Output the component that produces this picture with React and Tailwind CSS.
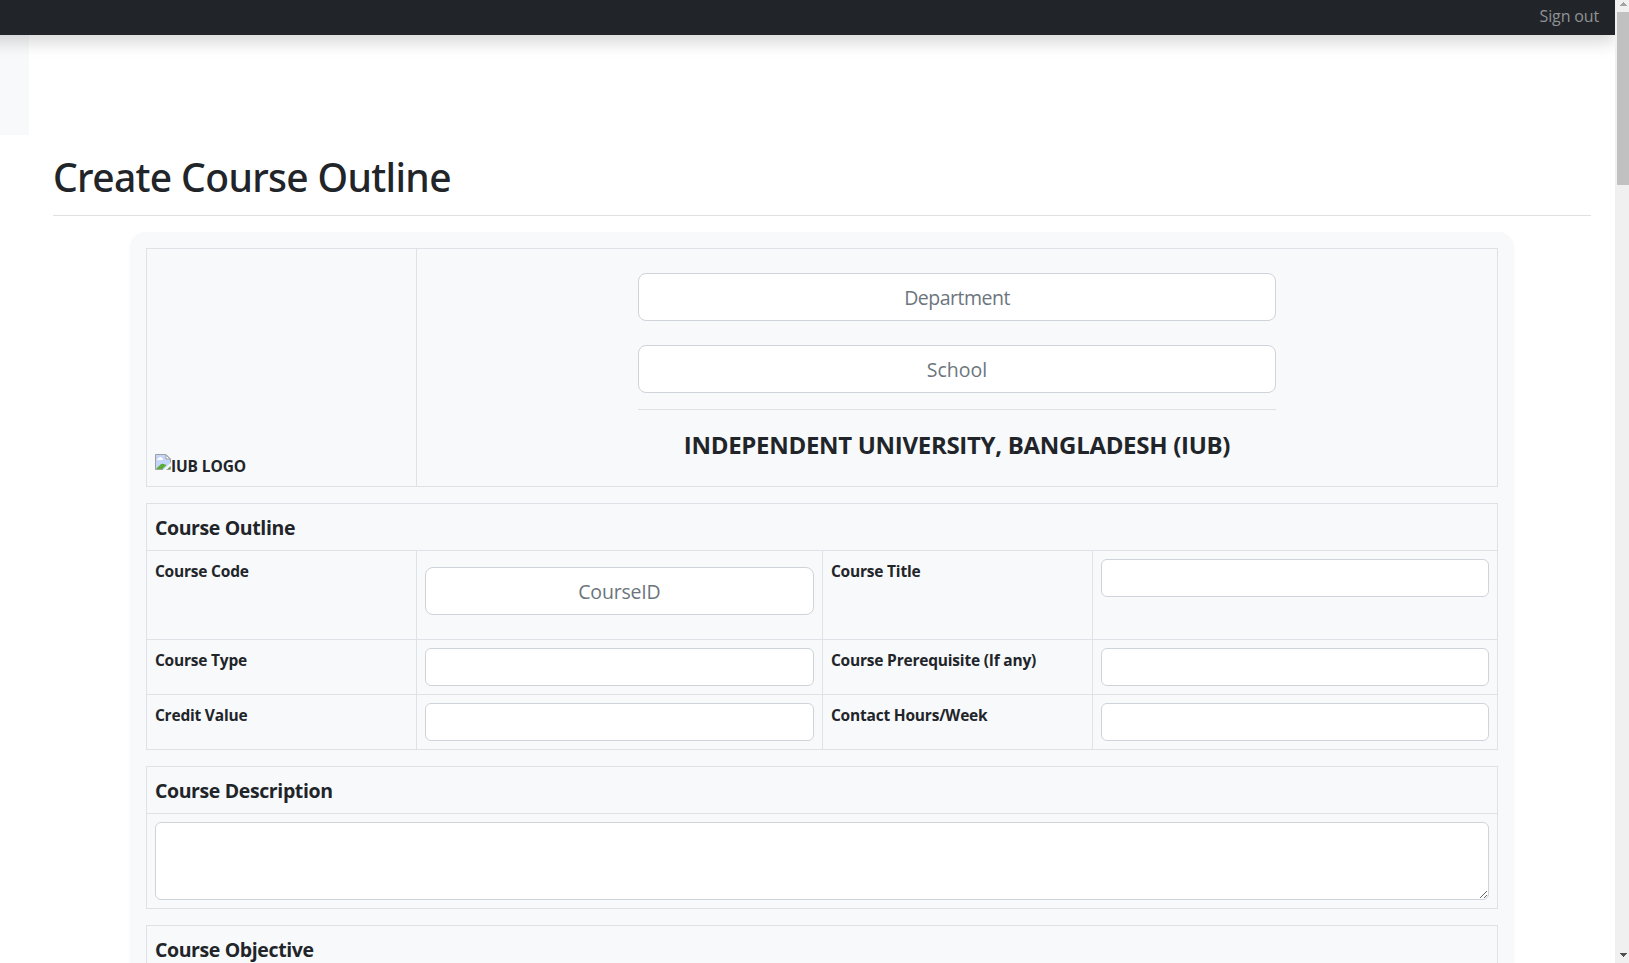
const cell = "border border-[#dee2e6] p-2 align-top text-left";
const control = "block w-full bg-white border border-[#ced4da] outline-none";

function Label({ children }) {
  return (
    <th className={`${cell} text-[15.5px] leading-[25px] font-bold tracking-[-0.2px]`}>{children}</th>
  );
}

function SectionHead({ children }) {
  return (
    <tr>
      <th
        colSpan={4}
        className="border border-[#dee2e6] px-2 pt-[9px] pb-[7px] text-left text-[19.5px] leading-[30px] font-bold tracking-[-0.38px]"
      >
        {children}
      </th>
    </tr>
  );
}

function Field() {
  return (
    <td className={cell}>
      <input className={`${control} h-[38px] rounded-md px-3`} />
    </td>
  );
}

function LargeInput({ placeholder, className }) {
  return (
    <input
      placeholder={placeholder}
      className={`${control} h-12 rounded-lg px-4 text-center text-[19.5px] placeholder:text-[#6c757d] placeholder:opacity-100 ${className}`}
    />
  );
}

function Table({ children }) {
  return (
    <table className="mb-4 w-full table-fixed border-collapse">
      <colgroup>
        <col className="w-[270px]" />
        <col className="w-[406px]" />
        <col className="w-[270px]" />
        <col />
      </colgroup>
      <tbody>{children}</tbody>
    </table>
  );
}

function TextSection({ title }) {
  return (
    <Table>
      <SectionHead>{title}</SectionHead>
      <tr>
        <td colSpan={4} className={cell}>
          <textarea className={`${control} h-[78px] resize-y rounded-md px-3 py-1.5`} />
        </td>
      </tr>
    </Table>
  );
}

function BrokenImage() {
  return (
    <svg width="16" height="16" viewBox="0 0 16 16" className="shrink-0">
      <path d="M0.5 0.5H11L15.5 5V9L8.5 15.5H0.5Z" fill="#c3d5f8" />
      <path d="M2 5.5q.3-1.400 1.700-1.300Q4.400 2.600 5.800 3.100 7 3.300 7 4.300 8.300 4.500 8 6H2.500Z" fill="#fff" />
      <path d="M1 15L5.500 10.500Q7.500 9 10 10.500L11.500 11 7.500 15Z" fill="#5aab38" />
      <path d="M12.500 15L15 12.500V15Z" fill="#5aab38" />
      <path d="M15.500 8.500V5L11 .5H.5V15.500H8M11.500 15.500H15.500V12.500" fill="none" stroke="#a0a0a0" />
      <path d="M11 1V5H15Z" fill="#fff" stroke="#a0a0a0" />
    </svg>
  );
}

export default function App() {
  return (
    <div className="flex h-[963px] overflow-hidden bg-white font-['Open_Sans','Noto_Sans',sans-serif] text-[#212529]">
      <div className="flex min-w-0 flex-1 flex-col overflow-hidden">
        <header className="z-10 -ml-6 flex h-[35px] shrink-0 justify-end bg-[#212529] pt-1 pr-4 shadow-[0_8px_16px_rgba(0,0,0,0.15)]">
          <a className="text-base leading-6 tracking-[-0.15px] text-[#909294]">Sign out</a>
        </header>
        <div className="flex min-h-0 flex-1">
          <nav className="h-[100px] w-[29px] shrink-0 bg-[#f8f9fb]" />
          <main className="min-w-0 flex-1 px-6 pt-[118px]">
            <div className="border-b border-[#dee0e2] pb-3.5">
              <h1 className="font-['Noto_Sans',sans-serif] text-[39px] leading-[48px] font-medium tracking-[-0.65px]">
                Create Course Outline
              </h1>
            </div>
            <div className="mx-auto mt-4 w-[90%] rounded-2xl bg-[#f8f9fb] p-4 shadow-[0_1px_2px_1px_rgba(0,0,0,0.02)]">
              <Table>
                <tr>
                  <th className="border border-[#dee2e6] p-2 text-left align-bottom">
                    <div className="flex items-start">
                      <BrokenImage />
                      <span className="text-[15.5px] leading-6 font-bold tracking-[-0.1px]">IUB LOGO</span>
                    </div>
                  </th>
                  <td colSpan={3} className={cell}>
                    <div className="mx-auto w-[638px] pt-4">
                      <LargeInput placeholder="Department" className="tracking-[-0.5px]" />
                      <LargeInput placeholder="School" className="mt-6 tracking-[0.05px]" />
                      <hr className="my-4 border-[#dee0e2]" />
                      <p className="mb-[15px] pt-px text-center text-2xl leading-9 font-bold tracking-[-0.3px] whitespace-nowrap">
                        INDEPENDENT UNIVERSITY, BANGLADESH (IUB)
                      </p>
                    </div>
                  </td>
                </tr>
              </Table>

              <Table>
                <SectionHead>Course Outline</SectionHead>
                <tr>
                  <Label>Course Code</Label>
                  <td className={cell}>
                    <LargeInput placeholder="CourseID" className="mt-2 mb-4 tracking-[-0.18px]" />
                  </td>
                  <Label>Course Title</Label>
                  <Field />
                </tr>
                <tr>
                  <Label>Course Type</Label>
                  <Field />
                  <Label>Course Prerequisite (If any)</Label>
                  <Field />
                </tr>
                <tr>
                  <Label>Credit Value</Label>
                  <Field />
                  <Label>Contact Hours/Week</Label>
                  <Field />
                </tr>
              </Table>

              <TextSection title="Course Description" />
              <TextSection title="Course Objective" />
            </div>
          </main>
        </div>
      </div>

      <aside className="flex w-[14px] shrink-0 flex-col bg-[#f0f0f0] pl-[2px]">
        <svg width="12" height="12" viewBox="0 0 12 12" shapeRendering="crispEdges">
          <path d="M6 2h1v1h1v1h1v1h1v1H3V5h1V4h1V3h1z" fill="#a3a3a3" />
        </svg>
        <div className="h-[173px] bg-[#c1c1c1]" />
        <svg width="12" height="12" viewBox="0 0 12 12" shapeRendering="crispEdges" className="mt-auto">
          <path d="M3 2h7v1H9v1H8v1H7v1H6V5H5V4H4V3H3z" fill="#505050" />
        </svg>
      </aside>
    </div>
  );
}
